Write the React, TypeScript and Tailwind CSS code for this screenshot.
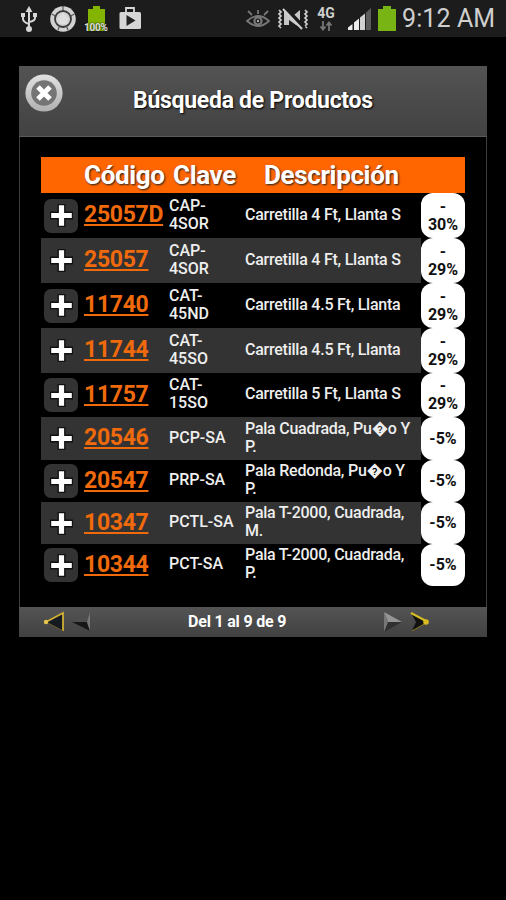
type Product = {
  code: string;
  clave: string[];
  desc: string[];
  discount: string[];
  height: string;
};

const PRODUCTS: Product[] = [
  { code: "25057D", clave: ["CAP-", "4SOR"], desc: ["Carretilla 4 Ft, Llanta S"], discount: ["-", "30%"], height: "h-[45px]" },
  { code: "25057", clave: ["CAP-", "4SOR"], desc: ["Carretilla 4 Ft, Llanta S"], discount: ["-", "29%"], height: "h-[45px]" },
  { code: "11740", clave: ["CAT-", "45ND"], desc: ["Carretilla 4.5 Ft, Llanta"], discount: ["-", "29%"], height: "h-[45px]" },
  { code: "11744", clave: ["CAT-", "45SO"], desc: ["Carretilla 4.5 Ft, Llanta"], discount: ["-", "29%"], height: "h-[45px]" },
  { code: "11757", clave: ["CAT-", "15SO"], desc: ["Carretilla 5 Ft, Llanta S"], discount: ["-", "29%"], height: "h-[44px]" },
  { code: "20546", clave: ["PCP-SA"], desc: ["Pala Cuadrada, Pu\uFFFDo Y", "P."], discount: ["-5%"], height: "h-[43px]" },
  { code: "20547", clave: ["PRP-SA"], desc: ["Pala Redonda, Pu\uFFFDo Y", "P."], discount: ["-5%"], height: "h-[42px]" },
  { code: "10347", clave: ["PCTL-SA"], desc: ["Pala T-2000, Cuadrada,", "M."], discount: ["-5%"], height: "h-[42px]" },
  { code: "10344", clave: ["PCT-SA"], desc: ["Pala T-2000, Cuadrada,", "P."], discount: ["-5%"], height: "h-[42px]" },
];

function StatusBar() {
  return (
    <div className="flex h-[37px] items-center bg-[#1c1c1c] text-[#cfcfcf]">
      <svg className="ml-[20px] h-[28px] w-[18px]" viewBox="0 0 18 28" fill="none" stroke="#d6d6d6" strokeWidth="2">
        <path d="M9 5v19M3 10v4q0 3 6 5M15 10v3q0 3-6 4" />
        <path d="M9 1l3.500 6h-7zM1 8h4v4H1zM13 8h4v4h-4z" fill="#d6d6d6" stroke="none" />
        <circle cx="9" cy="24" r="3" fill="#d6d6d6" stroke="none" />
      </svg>
      <svg className="ml-[11px] size-[28px]" viewBox="0 0 28 28">
        <circle cx="14" cy="14" r="12.800" fill="#d2d2d2" />
        <circle cx="14" cy="14" r="8" fill="none" stroke="#3a3a3a" strokeWidth="1.800" />
        <path d="M14 7.500l5.500 6-2 5.500h-7l-2-5.500z" fill="#dedede" />
        <path d="M2.500 9l4 2M25.500 9l-4 2M9 25l1.500-4M19 25l-1.500-4M14 1v4" stroke="#555" strokeWidth="1.200" />
      </svg>
      <div className="relative ml-[6px] h-[28px] w-[28px]">
        <svg className="size-full" viewBox="0 0 28 28">
          <path d="M10 1h7v3h5v22H5V4h5z" fill="#83b400" />
        </svg>
        <span className="absolute bottom-[0px] left-[1px] text-[10px] font-bold leading-[11px] tracking-[-0.2px] text-[#dfdfdf] [text-shadow:0_0_2px_#000]">100%</span>
      </div>
      <svg className="ml-[6px] h-[26px] w-[26px]" viewBox="0 0 26 26">
        <path d="M9 8V2h8v6" fill="none" stroke="#d6d6d6" strokeWidth="1.800" />
        <rect x="2.500" y="6" width="21.500" height="17" rx="1.500" fill="#d6d6d6" />
        <path d="M9.500 9l9 5.500-9 5.500z" fill="#222" />
      </svg>
      <svg className="ml-[103px] h-[24px] w-[24px]" viewBox="0 0 24 24" fill="none" stroke="#777" strokeWidth="1.800">
        <path d="M1 14q11-10 22 0Q12 24 1 14z" />
        <path d="M12 7V3M6 8L2 4M18 8l4-4" />
        <circle cx="12" cy="14" r="3.600" strokeWidth="2.200" />
        <circle cx="12" cy="14" r="1.200" fill="#aaa" stroke="none" />
      </svg>
      <svg className="ml-[7px] h-[24px] w-[32px]" viewBox="0 0 32 24" fill="none" stroke="#d0d0d0">
        <path d="M2 3l2 2-2 2 2 2-2 2 2 2-2 2 2 2-2 2 2 2M28 3l2 2-2 2 2 2-2 2 2 2-2 2 2 2-2 2 2 2" strokeWidth="1.700" />
        <path d="M7 4h5l5 4 6-5v17l-4-2-7-5v5H7z" fill="#c6c6c6" stroke="none" />
        <path d="M8 1l19 20" stroke="#1c1c1c" strokeWidth="4.500" />
        <path d="M6 2l19 20" strokeWidth="2" />
      </svg>
      <div className="ml-[7px] flex w-[20px] flex-col items-center">
        <span className="text-[14px] font-bold leading-[13px]">4G</span>
        <svg className="mt-[1px] h-[10px] w-[14px]" viewBox="0 0 14 10" fill="none" stroke="#777" strokeWidth="1.800">
          <path d="M4 0v8M1.500 5.500L4 8.500l2.500-3M10 10V2M7.500 4.500L10 1.500l2.500 3" />
        </svg>
      </div>
      <svg className="ml-[12px] h-[26px] w-[24px]" viewBox="0 0 24 26">
        <path d="M0 24v-2.500l4.500-3.500v6zM6 24v-7.500l5-4V24z" fill="#ececec" />
        <path d="M12 24V11.500l5-4V24z" fill="#d2d2d2" />
        <path d="M18 24V6.500L23 2v22z" fill="#5c5c5c" />
      </svg>
      <svg className="ml-[6px] h-[26px] w-[18px]" viewBox="0 0 18 26">
        <path d="M5 0h8v3h5v22H0V3h5z" fill="#78b414" />
      </svg>
      <span className="ml-[6px] whitespace-nowrap text-[25px] leading-none tracking-[0.1px]">9:12 AM</span>
    </div>
  );
}

function CloseButton() {
  return (
    <button aria-label="Cerrar" className="ml-[6px] mt-[8px] size-[38px] shrink-0">
      <svg className="size-full" viewBox="0 0 38 38">
        <defs>
          <linearGradient id="ring" x2="0" y2="1">
            <stop stopColor="#e2e2e2" />
            <stop offset="1" stopColor="#b0b0b0" />
          </linearGradient>
        </defs>
        <circle cx="19" cy="19" r="18.600" fill="url(#ring)" />
        <circle cx="19" cy="19" r="12.800" fill="#757575" />
        <path d="M13 13l12 12M25 13l-12 12" stroke="#fff" strokeWidth="5" />
      </svg>
    </button>
  );
}

function ProductRow({ product, striped }: { product: Product; striped: boolean }) {
  return (
    <div className={`flex ${product.height}`}>
      <div className={`flex w-[380px] items-center pl-[3px] ${striped ? "bg-[#333333]" : "bg-black"}`}>
        <div className="flex size-[34px] shrink-0 items-center justify-center rounded-[7px] bg-[#333333]">
          <svg className="size-[25px]" viewBox="0 0 25 25">
            <path d="M12.500 1v23M1 12.500h23" stroke="#111" strokeWidth="8" />
            <path d="M12.500 2.200v20.600M2.200 12.500h20.600" stroke="#fff" strokeWidth="5.200" />
          </svg>
        </div>
        <div className="w-[87px] shrink-0 pl-[6px]">
          <a className="text-[23px] font-bold leading-[26px] tracking-[-0.3px] text-[#f06a0c] underline decoration-2 underline-offset-[2px]">{product.code}</a>
        </div>
        <div className="w-[80px] shrink-0 pb-[2px] pl-[4px] text-[16px] font-medium leading-[18px]">
          {product.clave.map((line) => (
            <div key={line}>{line}</div>
          ))}
        </div>
        <div className="whitespace-nowrap pb-[2px] text-[16px] font-medium leading-[18px] tracking-[-0.240px]">
          {product.desc.map((line) => (
            <div key={line}>{line}</div>
          ))}
        </div>
      </div>
      <div className="flex w-[44px] flex-col items-center justify-center rounded-[12px] bg-white text-center text-[16px] font-bold leading-[18px] text-[#111]">
        {product.discount.map((line) => (
          <div key={line}>{line}</div>
        ))}
      </div>
    </div>
  );
}

function Pager() {
  return (
    <footer className="flex h-[30px] items-center bg-linear-to-b from-[#545454] to-[#414141]">
      <svg className="ml-[24px] h-[22px] w-[22px]" viewBox="0 0 22 22">
        <path d="M3 11L20 2v18z" fill="#161b22" />
        <path d="M20 20V2L3 11" fill="none" stroke="#cfae35" strokeWidth="1.800" />
        <path d="M3 11l17 9" stroke="#6b5f2c" strokeWidth="1" />
        <circle cx="3" cy="11" r="2.200" fill="#e6c64c" />
      </svg>
      <svg className="ml-[6px] h-[22px] w-[20px]" viewBox="0 0 20 22">
        <path d="M1 11L19 1l-3 10z" fill="#4e4e4e" />
        <path d="M1 11h15l3 9z" fill="#171717" />
        <path d="M19 1l-3 10 3 9z" fill="#777" />
      </svg>
      <span className="ml-[97px] w-[98px] whitespace-nowrap text-[16px] font-bold leading-none tracking-[-0.2px] text-white">Del 1 al 9 de 9</span>
      <svg className="ml-[97px] h-[22px] w-[20px]" viewBox="0 0 20 22">
        <path d="M1 1l18 10H5z" fill="#969696" />
        <path d="M5 11h14L1 21z" fill="#303030" />
        <path d="M1 1l4 10-4 10z" fill="#777" />
      </svg>
      <svg className="ml-[7px] h-[22px] w-[22px]" viewBox="0 0 22 22">
        <path d="M1 2l16 9L2 20l4-9z" fill="#111" />
        <path d="M1 2l15 8" stroke="#d5bb24" strokeWidth="2" />
        <path d="M2 20l14-8" stroke="#8b7824" strokeWidth="1" />
        <circle cx="16" cy="11" r="2.800" fill="#dabb21" />
      </svg>
    </footer>
  );
}

export default function App() {
  return (
    <div className="h-[900px] w-[506px] overflow-hidden bg-black font-['Roboto',sans-serif] text-[#eeeeee]">
      <StatusBar />
      <main className="ml-[19px] mt-[29px] flex h-[571px] w-[468px] flex-col">
        <header className="flex h-[71px] border-b border-[#5a5a5a] bg-linear-to-b from-[#535353] to-[#424242]">
          <CloseButton />
          <h1 className="ml-[70px] mt-[21px] whitespace-nowrap text-[23px] font-bold leading-[27px] tracking-[-0.28px] text-white [text-shadow:1px_1px_2px_#000]">Búsqueda de Productos</h1>
        </header>
        <section className="h-[470px] border-x border-[#3d3d3d] px-[21px] pt-[20px]">
          <div className="flex h-[36px] w-[424px] whitespace-nowrap bg-[#ff6600] pl-[43px] text-[26px] font-bold leading-[36px] tracking-[-0.35px] text-white [text-shadow:1px_1px_2px_#222]">
            <span className="w-[89px]">Código</span>
            <span className="w-[91px]">Clave</span>
            <span>Descripción</span>
          </div>
          {PRODUCTS.map((product, i) => (
            <ProductRow key={product.code} product={product} striped={i % 2 === 1} />
          ))}
        </section>
        <Pager />
      </main>
    </div>
  );
}
